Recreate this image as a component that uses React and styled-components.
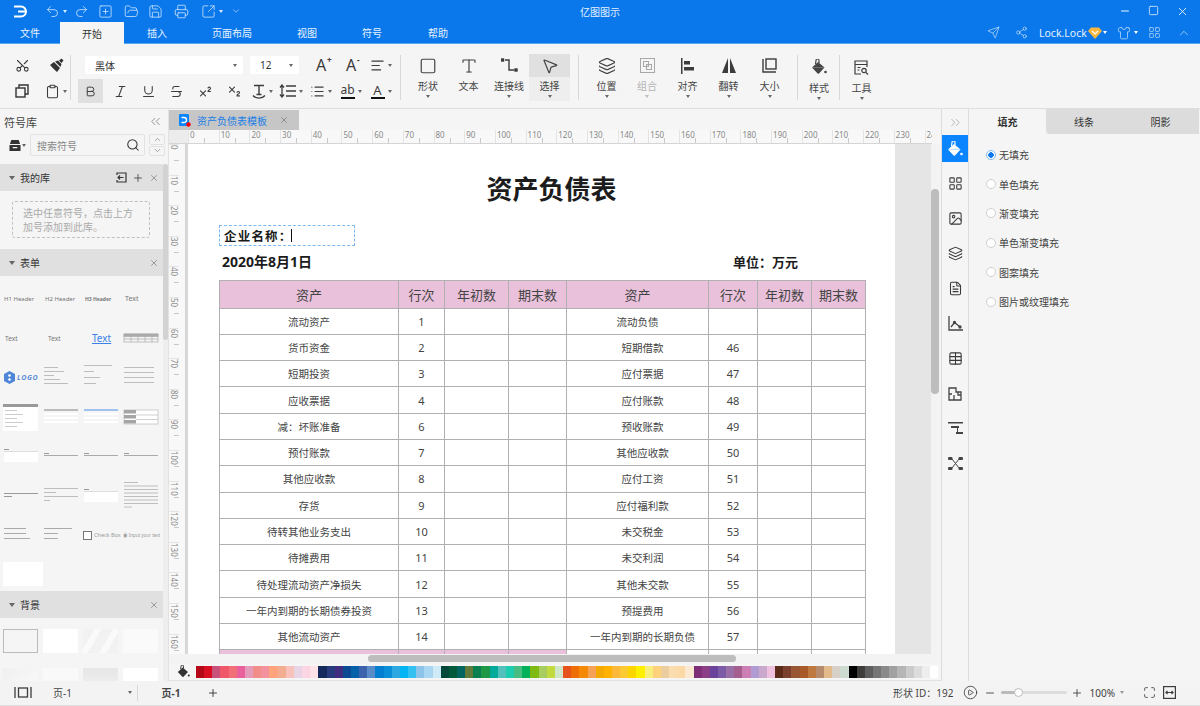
import React from "react";
import styled, { createGlobalStyle } from "styled-components";
import {
  Undo2, Redo2, SquarePlus, FolderOpen, Save, Printer, SquareArrowOutUpRight, ChevronDown, ChevronUp,
  Minus, Square, X, Send, Share2, Shirt, Scissors, Clipboard, Bold, Italic, Underline, Strikethrough,
  Superscript, Subscript, AlignLeft, List, Type, MousePointer2, Layers, Search, Plus,
  ChevronsLeft, ChevronsRight, Image, FileText, Table, Maximize, CirclePlay, LayoutGrid,
} from "lucide-react";

const BLUE = "#0a78ea";
const INK = "#3c3c3c";

const GlobalStyle = createGlobalStyle`
  html, body { margin: 0; padding: 0; overflow: hidden; }
  body { font-family: "Noto Sans", "Noto Sans CJK SC", sans-serif; font-size: 10px; color: #333; }
  * { box-sizing: border-box; }
`;

const Shell = styled.div`
  width: 1200px;
  height: 706px;
  display: flex;
  flex-direction: column;
  overflow: hidden;
  background: #f5f5f5;
`;

/* ---------- title bar ---------- */
const TitleBar = styled.header`
  height: 22px;
  flex: none;
  background: ${BLUE};
  color: #dcecff;
  display: grid;
  grid-template-columns: 1fr auto 1fr;
  align-items: center;
`;
const QuickBar = styled.div`
  display: flex;
  align-items: center;
`;
const QuickBtn = styled.span`
  width: ${({ $w }) => $w}px;
  display: flex;
  align-items: center;
  justify-content: center;
  gap: 3px;
`;
const AppTitle = styled.div`
  font-size: 10px;
  color: #e4f0ff;
`;
const WindowBtns = styled.div`
  display: flex;
  justify-content: flex-end;
  padding-right: 3px;
`;
const WindowBtn = styled.span`
  width: 29px;
  display: flex;
  justify-content: center;
  color: #f0f6ff;
`;
const Caret = styled.i`
  display: inline-block;
  width: 0;
  height: 0;
  flex: none;
  border-left: ${({ $big }) => ($big ? 3.5 : 2.5)}px solid transparent;
  border-right: ${({ $big }) => ($big ? 3.5 : 2.5)}px solid transparent;
  border-top: ${({ $big }) => ($big ? 4 : 3)}px solid ${({ $color }) => $color || "#666"};
`;

/* ---------- menu tabs ---------- */
const MenuRow = styled.nav`
  height: 22px;
  flex: none;
  background: ${BLUE};
  border-bottom: 1px solid #5aa7f2;
  display: flex;
  justify-content: space-between;
  align-items: stretch;
`;
const MenuTabs = styled.div`
  display: flex;
`;
const MenuTab = styled.span`
  width: ${({ $w }) => $w}px;
  display: flex;
  align-items: center;
  justify-content: center;
  font-size: 10px;
  color: ${({ $active }) => ($active ? "#333" : "#e8f2ff")};
  background: ${({ $active }) => ($active ? "#f5f5f5" : "transparent")};
  margin-bottom: ${({ $active }) => ($active ? "-1px" : "0")};
`;
const UserArea = styled.div`
  display: flex;
  align-items: center;
  color: #cfe4fb;
`;
const UserBtn = styled.span`
  width: ${({ $w }) => $w}px;
  display: flex;
  align-items: center;
  justify-content: center;
  gap: 3px;
`;
const UserName = styled.span`
  width: 78px;
  padding-left: 4px;
  display: flex;
  align-items: center;
  gap: 1px;
  font-size: 10.5px;
  color: #e8f2ff;
  white-space: nowrap;
`;

/* ---------- ribbon ---------- */
const Ribbon = styled.section`
  height: 65px;
  flex: none;
  background: #f5f5f5;
  border-bottom: 1px solid #dedede;
  padding-top: 10px;
  display: flex;
  align-items: flex-start;
`;
const ClipGroup = styled.div`
  width: 70px;
  padding-top: 2px;
  display: grid;
  grid-template-columns: 36px 32px;
  grid-template-rows: 18px 24px;
  row-gap: 5px;
  padding-left: 4px;
`;
const Sep = styled.div`
  width: 1px;
  height: ${({ $h }) => $h || 45}px;
  margin-top: 1px;
  flex: none;
  background: #d8d8d8;
`;
const FontGroup = styled.div`
  width: 329px;
  padding: 2px 0 0 7px;
  display: flex;
  flex-direction: column;
  gap: 5px;
`;
const FontRow = styled.div`
  display: flex;
  align-items: center;
  height: ${({ $h }) => $h}px;
  margin-left: ${({ $indent }) => $indent || 0}px;
`;
const Dropdown = styled.div`
  width: ${({ $w }) => $w}px;
  height: 18px;
  margin-right: 7px;
  padding: 0 6px 0 10px;
  background: #fff;
  border-radius: 2px;
  display: flex;
  align-items: center;
  justify-content: space-between;
  font-size: 10px;
  color: #333;
`;
const ToolBtn = styled.span`
  width: ${({ $w }) => $w || 30}px;
  height: 100%;
  flex: none;
  display: flex;
  align-items: center;
  justify-content: center;
  gap: 3px;
  color: ${INK};
  background: ${({ $on }) => ($on ? "#e0e0e0" : "transparent")};
  margin-right: ${({ $mr }) => $mr || 0}px;
`;
const BigA = styled.span`
  position: relative;
  font-size: 16px;
  line-height: 1;
  color: ${INK};
`;
const BigASign = styled.span`
  position: absolute;
  top: -1px;
  left: 11px;
  font-size: 8px;
  line-height: 1;
  font-weight: 700;
`;
const BarLetter = styled.span`
  display: flex;
  flex-direction: column;
  align-items: center;
  font-size: ${({ $size }) => $size}px;
  line-height: 12px;
  color: ${INK};
  &::after {
    content: "";
    width: 14px;
    height: 2px;
    background: #111;
    margin-top: 1px;
  }
`;
const BigGroup = styled.div`
  display: flex;
  padding-left: ${({ $pad }) => $pad || 0}px;
  padding-right: ${({ $right }) => $right || 0}px;
`;
const BigBtn = styled.div`
  width: ${({ $w }) => $w || 41}px;
  height: 47px;
  display: flex;
  flex-direction: column;
  align-items: center;
  font-size: 10px;
  color: ${({ $off }) => ($off ? "#b5b5b5" : "#444")};
  background: ${({ $on }) => ($on ? "#eeeeee" : "transparent")};
`;
const BigIcon = styled.div`
  height: ${({ $tall }) => ($tall ? 26 : 23)}px;
  width: 100%;
  display: flex;
  align-items: center;
  justify-content: center;
  color: ${({ $off }) => ($off ? "#aaa" : "#444")};
  background: ${({ $on }) => ($on ? "#e0e0e0" : "transparent")};
`;
const BigLabel = styled.div`
  height: 15px;
  line-height: 15px;
  margin-top: ${({ $tall }) => ($tall ? 1 : 2)}px;
  white-space: nowrap;
  margin-bottom: 1px;
`;

/* ---------- workspace ---------- */
const Workspace = styled.main`
  flex: 1;
  min-height: 0;
  display: flex;
`;
const LeftPanel = styled.aside`
  width: 169px;
  flex: none;
  display: flex;
  flex-direction: column;
  background: #f5f5f5;
  border-right: 1px solid #e2e2e2;
  overflow: hidden;
`;
const PanelHead = styled.div`
  height: 25px;
  flex: none;
  padding: 0 5px 0 4px;
  display: flex;
  align-items: center;
  justify-content: space-between;
  font-size: 11px;
  color: #444;
`;
const SearchRow = styled.div`
  height: 30px;
  flex: none;
  padding-left: 9px;
  display: flex;
  gap: 4px;
`;
const BoxBtn = styled.span`
  width: 17px;
  height: 22px;
  display: flex;
  align-items: center;
  gap: 1px;
  color: #333;
`;
const SearchBox = styled.div`
  width: 115px;
  height: 22px;
  padding: 0 4px 0 6px;
  border: 1px solid #e2e2e2;
  border-radius: 2px;
  display: flex;
  align-items: center;
  justify-content: space-between;
  font-size: 10px;
  color: #888;
`;
const StepCol = styled.div`
  display: flex;
  flex-direction: column;
  gap: 1px;
`;
const StepBtn = styled.span`
  width: 16px;
  height: 10.5px;
  border: 1px solid #e2e2e2;
  border-radius: 2px;
  display: flex;
  align-items: center;
  justify-content: center;
  color: #888;
`;
const LibraryScroll = styled.div`
  flex: 1;
  min-height: 0;
  display: flex;
  overflow: hidden;
`;
const LibraryList = styled.div`
  width: 163px;
  flex: none;
`;
const LibraryTrack = styled.div`
  width: 5px;
  flex: none;
  background: #eee;
`;
const LibraryThumb = styled.div`
  height: 176px;
  background: #d2d2d2;
  border-radius: 3px;
`;
const SectionHead = styled.div`
  height: 27px;
  padding: 0 4px 0 9px;
  background: #e0e0e0;
  display: flex;
  align-items: center;
  gap: 5px;
  font-size: 10px;
  color: #333;
`;
const SectionTools = styled.span`
  margin-left: auto;
  display: flex;
  align-items: center;
  gap: 5px;
  color: #555;
`;
const MyLibBody = styled.div`
  height: 58px;
  padding: 10px 0 0 12px;
`;
const DropHint = styled.div`
  width: 138px;
  height: 37px;
  padding: 4px 10px;
  border: 1px dashed #c0c0c0;
  border-radius: 3px;
  font-size: 10px;
  line-height: 14px;
  color: #aaa;
`;
const ThumbGrid = styled.div`
  height: 315px;
  padding: 3px 0 0 3px;
  display: grid;
  grid-template-columns: repeat(4, 40px);
  grid-auto-rows: 39.4px;
  align-items: center;
`;
const ThumbText = styled.span`
  font-size: ${({ $size }) => $size}px;
  font-weight: ${({ $bold }) => ($bold ? 700 : 400)};
  color: ${({ $color }) => $color || "#777"};
  padding-left: ${({ $left }) => $left || 1}px;
  text-decoration: ${({ $link }) => ($link ? "underline" : "none")};
  white-space: nowrap;
`;
const LogoThumb = styled.span`
  display: flex;
  align-items: center;
  gap: 2px;
  padding-left: 1px;
  font-size: 7px;
  font-weight: 700;
  font-style: italic;
  letter-spacing: 0.7px;
  color: #5c8ed8;
`;
const CheckThumb = styled.span`
  display: flex;
  align-items: center;
  gap: 2px;
  font-size: ${({ $size }) => $size}px;
  color: #999;
  white-space: nowrap;
  overflow: hidden;
`;
const CheckMark = styled.i`
  width: 9px;
  height: 9px;
  flex: none;
  border: 1px solid #777;
  background: #fff;
`;
const BgGrid = styled.div`
  padding: 11px 0 0 3px;
  display: grid;
  grid-template-columns: repeat(4, 35px);
  column-gap: 5px;
  row-gap: 15px;
`;
const BgTile = styled.div`
  height: 24px;
  border: ${({ $outlined }) => ($outlined ? "1px solid #bbb" : "none")};
  background: ${({ $bg }) => $bg};
`;

/* ---------- centre ---------- */
const Centre = styled.section`
  width: 772px;
  flex: none;
  display: flex;
  flex-direction: column;
  min-height: 0;
`;
const DocTabs = styled.div`
  height: 20px;
  flex: none;
  margin-top: 1px;
  display: flex;
`;
const DocTab = styled.div`
  width: 130px;
  padding: 0 10px 0 10px;
  background: #c6c6c6;
  display: flex;
  align-items: center;
  font-size: 10px;
  color: #1a7ee6;
`;
const DocName = styled.span`
  margin-left: 6px;
  flex: 1;
`;
const RulerTop = styled.div`
  height: 14px;
  flex: none;
  margin-right: 9px;
  display: flex;
  background: #f8f8f8;
  border-bottom: 1px solid #d5d5d5;
  overflow: hidden;
`;
const RulerCorner = styled.div`
  width: 19px;
  flex: none;
  background: #ececec;
`;
const RulerCell = styled.span`
  width: 30.7px;
  flex: none;
  position: relative;
  padding-left: 1px;
  border-left: 1px solid #e4e4e4;
  font-size: 8px;
  line-height: 10px;
  color: #888;
  &::after {
    content: "";
    position: absolute;
    left: 15px;
    bottom: 0;
    width: 1px;
    height: 5px;
    background: #c8c8c8;
  }
`;
const CanvasRow = styled.div`
  flex: 1;
  min-height: 0;
  display: flex;
  overflow: hidden;
`;
const RulerSide = styled.div`
  width: 17px;
  flex: none;
  background: #f8f8f8;
  border-right: 1px solid #d5d5d5;
  overflow: hidden;
`;
const RulerSideCell = styled.span`
  display: block;
  height: 30.6px;
  position: relative;
  border-top: 1px solid #e4e4e4;
  font-size: 8px;
  line-height: 10px;
  color: #888;
  writing-mode: vertical-rl;
  &::after {
    content: "";
    position: absolute;
    right: 0;
    top: 15px;
    width: 5px;
    height: 1px;
    background: #c8c8c8;
  }
`;
const PageGutter = styled.div`
  width: 2px;
  flex: none;
  background: #d8d8d8;
`;
const Page = styled.div`
  width: 707px;
  flex: none;
  background: #fff;
  padding: 29px 30px 0 31px;
  overflow: hidden;
`;
const PageTitle = styled.h1`
  margin: 0;
  height: 32px;
  padding-left: 19px;
  line-height: 32px;
  font-size: 26px;
  font-weight: 700;
  text-align: center;
  color: #1c1c1c;
`;
const CompanyBox = styled.div`
  width: 136px;
  height: 21px;
  margin-top: 20px;
  padding-left: 4px;
  border: 1px dashed #7db8f3;
  display: flex;
  align-items: center;
  font-size: 12.5px;
  font-weight: 700;
  letter-spacing: 1.2px;
  color: #1a1a1a;
`;
const TextCursor = styled.i`
  width: 1px;
  height: 13px;
  margin-left: -2px;
  background: #111;
`;
const MetaRow = styled.div`
  height: 34px;
  padding: 0 67px 4px 3px;
  display: flex;
  align-items: center;
  justify-content: space-between;
  font-size: 13px;
  font-weight: 700;
  color: #1c1c1c;
`;
const DateText = styled.span`
  font-size: 14px;
`;
const Sheet = styled.table`
  width: 646px;
  table-layout: fixed;
  border-collapse: collapse;
`;
const HeadCell = styled.th`
  height: 27.5px;
  padding: 0;
  border: 1px solid #b0b0b0;
  background: #e9c1db;
  font-size: 13px;
  font-weight: 400;
  color: #444;
`;
const Cell = styled.td`
  height: 26.3px;
  padding: 0 0 0 ${({ $indent }) => ($indent ? 10 : 0)}px;
  border: 1px solid #b0b0b0;
  background: ${({ $pink }) => ($pink ? "#e9c1db" : "#fff")};
  font-size: ${({ $num }) => ($num ? 11 : 10.5)}px;
  text-align: center;
  color: #444;
  white-space: nowrap;
`;
const GreyArea = styled.div`
  width: 36px;
  flex: none;
  background: #e5e5e5;
`;
const VScroll = styled.div`
  width: 9px;
  flex: none;
  background: #f3f3f3;
  padding-top: 45px;
`;
const ScrollThumbV = styled.div`
  width: 8px;
  height: 205px;
  border-radius: 4px;
  background: #bdbdbd;
`;
const HScroll = styled.div`
  height: 10px;
  flex: none;
  padding: 1px 0 0 199px;
  background: #f3f3f3;
`;
const ScrollThumbH = styled.div`
  width: 368px;
  height: 7px;
  border-radius: 4px;
  background: #bdbdbd;
`;
const PaletteRow = styled.div`
  height: 17px;
  flex: none;
  display: flex;
  align-items: center;
  padding: 0 0 1px 8px;
  background: #f5f5f5;
  border-bottom: 1px solid #e2e2e2;
`;
const PaletteIcon = styled.span`
  width: 18px;
  margin-right: 1px;
  display: flex;
  color: #333;
`;
const Swatches = styled.div`
  display: flex;
`;
const Swatch = styled.i`
  width: 8.17px;
  height: 12px;
  background: ${({ $c }) => $c};
`;

/* ---------- right side ---------- */
const IconStrip = styled.div`
  width: 28px;
  flex: none;
  display: flex;
  flex-direction: column;
  gap: 8px;
  border-left: 1px solid #dcdcdc;
  border-right: 1px solid #dcdcdc;
  color: #444;
`;
const StripToggle = styled.div`
  height: 26px;
  margin-bottom: -8px;
  display: flex;
  align-items: center;
  justify-content: center;
  color: #999;
`;
const StripBtn = styled.div`
  height: 27px;
  flex: none;
  display: flex;
  align-items: center;
  justify-content: center;
  color: ${({ $on }) => ($on ? "#fff" : "#3a3a3a")};
  background: ${({ $on }) => ($on ? "#0a84ff" : "transparent")};
`;
const RightPanel = styled.aside`
  flex: 1;
  display: flex;
  flex-direction: column;
`;
const PropTabs = styled.div`
  height: 25px;
  flex: none;
  display: flex;
  background: #f5f5f5;
`;
const PropTab = styled.div`
  width: ${({ $w }) => $w}px;
  display: flex;
  align-items: center;
  justify-content: center;
  font-size: 10px;
  font-weight: ${({ $on }) => ($on ? 700 : 400)};
  color: #333;
  background: ${({ $on }) => ($on ? "#f5f5f5" : "#dcdcdc")};
  border-bottom-left-radius: ${({ $first }) => ($first ? "4px" : "0")};
`;
const RadioList = styled.div`
  padding: 6px 0 0 17px;
`;
const RadioRow = styled.label`
  height: 29.4px;
  display: flex;
  align-items: center;
  gap: 3px;
  font-size: 10px;
  color: #444;
`;
const RadioDot = styled.i`
  width: 10px;
  height: 10px;
  border-radius: 50%;
  border: 1px solid ${({ $on }) => ($on ? "#7db8f3" : "#d0d0d0")};
  background: ${({ $on }) => ($on ? "radial-gradient(circle, #0a78ea 0 2.5px, #fff 3px)" : "#fff")};
`;

/* ---------- status bar ---------- */
const StatusBar = styled.footer`
  height: 25px;
  flex: none;
  padding-bottom: 1px;
  display: flex;
  align-items: center;
  background: #f3f3f3;
  border-bottom: 1px solid #dedede;
  color: #444;
`;
const StatusItem = styled.span`
  width: ${({ $w }) => $w}px;
  flex: none;
  display: flex;
  align-items: center;
  justify-content: ${({ $left }) => ($left ? "flex-start" : "center")};
  gap: ${({ $gap }) => $gap || 0}px;
  font-size: 10px;
  font-weight: ${({ $bold }) => ($bold ? 700 : 400)};
  white-space: nowrap;
`;
const PageSelect = styled.div`
  width: 92px;
  height: 16px;
  padding: 0 5px 0 7px;
  border-right: 1px solid #d8d8d8;
  display: flex;
  align-items: center;
  justify-content: space-between;
  font-size: 10px;
`;
const StatusRight = styled.div`
  margin-left: auto;
  padding-right: 23px;
  display: flex;
  align-items: center;
`;
const ZoomTrack = styled.div`
  width: 66px;
  height: 3px;
  border-radius: 2px;
  background: linear-gradient(to right, #bbb 0 26%, #ddd 26%);
  display: flex;
  align-items: center;
  padding-left: 13px;
`;
const ZoomKnob = styled.i`
  width: 9px;
  height: 9px;
  border-radius: 50%;
  background: #fff;
  border: 1px solid #bbb;
`;

const CutIcon = styled(Scissors)`
  transform: rotate(-90deg);
`;

/* drawings with no package icon */
const LogoMark = () => (
  <svg width="15" height="13" viewBox="0 0 15 13" fill="none" stroke="#fff" strokeWidth="2">
    <path d="M1 1.5h7a5 5 0 0 1 0 10H1M5 6.5h8" />
  </svg>
);
const Diamond = () => (
  <svg width="14" height="12" viewBox="0 0 14 12">
    <path d="M3 0.5h8l3 3.5-7 8-7-8z" fill="#f6b73c" />
    <path d="M4 4l3 3 3-3" fill="none" stroke="#fff" strokeWidth="1.2" />
  </svg>
);
const BrushIcon = () => (
  <svg width="15" height="15" viewBox="0 0 15 15" fill="#333">
    <path d="M1 7l4-3 6 6-3 4C6 12 3 9.500 1 7z" />
    <path d="M6 3.500l3-1 3.500 3.500-1 3zM10 2.500L12.500.5l2 2-2 2.500z" />
  </svg>
);
const CopyIcon = () => (
  <svg width="14" height="14" viewBox="0 0 14 14" fill="none" stroke="#333" strokeWidth="1.4">
    <rect x="1" y="4" width="9" height="9" />
    <path d="M4 4V1h9v9h-3" />
  </svg>
);
const TextStyleIcon = () => (
  <svg width="14" height="15" viewBox="0 0 14 15" fill="none" stroke={INK} strokeWidth="1.4">
    <path d="M2 1.500h10M7 1.500v9M4.500 10.500h5M1 11.500c3 3.500 9 3.500 12 0" />
  </svg>
);
const LineSpaceIcon = () => (
  <svg width="17" height="14" viewBox="0 0 17 14" fill="none" stroke={INK} strokeWidth="1.3">
    <path d="M3 1v12M1 3.500L3 1l2 2.500M1 10.500L3 13l2-2.500M7 2h10M7 7h10M7 12h10" />
  </svg>
);
const ConnectorIcon = () => (
  <svg width="17" height="15" viewBox="0 0 17 15" fill="none" stroke={INK} strokeWidth="1.4">
    <path d="M4 2h4v10h5" />
    <rect x="0.500" y="1" width="2" height="2" fill={INK} />
    <rect x="14" y="11" width="2" height="2" fill={INK} />
  </svg>
);
const GroupIcon = () => (
  <svg width="17" height="17" viewBox="0 0 17 17" fill="none" stroke="#a8a8a8" strokeWidth="1">
    <rect x="1.500" y="1.500" width="14" height="14" />
    <rect x="4.500" y="4.500" width="5" height="5" />
    <rect x="7.500" y="7.500" width="5" height="5" />
  </svg>
);
const AlignObjectsIcon = () => (
  <svg width="15" height="16" viewBox="0 0 15 16" fill={INK}>
    <rect x="1" y="0" width="1.500" height="16" />
    <rect x="4" y="3" width="6" height="3.500" />
    <rect x="4" y="9" width="10" height="3.500" />
  </svg>
);
const FlipIcon = () => (
  <svg width="16" height="15" viewBox="0 0 16 15" fill={INK}>
    <path d="M7 0v15H1zM9 0v15h6z" />
  </svg>
);
const SizeIcon = () => (
  <svg width="15" height="15" viewBox="0 0 15 15" fill="none" stroke={INK} strokeWidth="1.400">
    <path d="M1 1v13h13" />
    <rect x="4" y="1" width="10" height="10" />
  </svg>
);
const ToolIcon = () => (
  <svg width="15" height="15" viewBox="0 0 15 15" fill="none" stroke={INK} strokeWidth="1.200">
    <path d="M7 14H1V1h12v6M1 4.500h12M3.500 7.500h3M3.500 10h2" />
    <circle cx="10" cy="10.500" r="2.200" />
    <path d="M11.800 12.300L14 14.500" />
  </svg>
);
const FitWidthIcon = () => (
  <svg width="13" height="13" viewBox="0 0 13 13" fill="none" stroke={INK} strokeWidth="1.200">
    <rect x="0.600" y="0.600" width="11.800" height="11.800" />
    <path d="M3 6.500h7M4.500 5L3 6.500 4.500 8M8.500 5L10 6.500 8.500 8" />
  </svg>
);
const PageFrameIcon = () => (
  <svg width="18" height="11" viewBox="0 0 18 11" fill="none" stroke={INK} strokeWidth="1.300">
    <rect x="4.500" y="1" width="9" height="9" />
    <path d="M1 0v11M17 0v11" />
  </svg>
);
const ChartIcon = () => (
  <svg width="15" height="15" viewBox="0 0 15 15" fill="none" stroke="#444" strokeWidth="1.300">
    <path d="M1 0v14h14M3 11l3.500-4.500L9 8.500 12 11" />
    <circle cx="6.500" cy="6.500" r="1" fill="#444" />
    <circle cx="12" cy="11" r="1" fill="#444" />
  </svg>
);
const PlanIcon = () => (
  <svg width="14" height="14" viewBox="0 0 14 14" fill="none" stroke="#444" strokeWidth="1.300">
    <path d="M1 1h7v4h5v8H1zM1 7h3M6 13V8M10 5v3h3" />
  </svg>
);
const OutlineIcon = () => (
  <svg width="15" height="13" viewBox="0 0 15 13" fill="#444">
    <rect x="0" y="0" width="15" height="1.500" />
    <rect x="3" y="4" width="8" height="2" />
    <path d="M9 6h1v4H9z" />
    <rect x="8" y="10" width="7" height="2" />
  </svg>
);
const NodesIcon = () => (
  <svg width="15" height="13" viewBox="0 0 15 13" fill="#444">
    <rect x="0" y="0" width="4.500" height="3" rx="1" />
    <rect x="0" y="10" width="4.500" height="3" rx="1" />
    <rect x="10.500" y="0" width="4.500" height="3" rx="1" />
    <rect x="10.500" y="10" width="4.500" height="3" rx="1" />
    <path d="M4 2l3.500 4.500L11 2M4 11l3.500-4.500L11 11" fill="none" stroke="#444" />
  </svg>
);
const DocBadge = () => (
  <svg width="12" height="13" viewBox="0 0 12 13">
    <rect x="0" y="0" width="10" height="12" rx="1" fill="#0a84ff" />
    <path d="M2.500 3.500h2.500a2.500 2.500 0 0 1 0 5H2.500" fill="none" stroke="#fff" strokeWidth="1.300" />
    <circle cx="9.500" cy="10.500" r="2.200" fill="#f00" />
  </svg>
);
const HexLogo = () => (
  <svg width="11" height="13" viewBox="0 0 11 13">
    <path d="M5.500 0L11 3v7l-5.500 3L0 10V3z" fill="#4f86d8" />
    <circle cx="5.500" cy="4.500" r="1.300" fill="#fff" />
    <circle cx="5.500" cy="8.500" r="1.300" fill="#fff" />
  </svg>
);
const Bucket = ({ size = 16 }) => (
  <svg width={size} height={size} viewBox="0 0 16 16" fill="currentColor">
    <path d="M1 8.500L7 3l6.500 5.500H1z" />
    <path d="M1 8.500h12.500L8 14.500a1 1 0 0 1-1.400 0z" />
    <path d="M4.500 5L5 1.500a1.500 1.500 0 0 1 3 0V4" fill="none" stroke="currentColor" strokeWidth="1.200" />
    <circle cx="14.500" cy="13" r="1.300" />
  </svg>
);
const DrawerIcon = () => (
  <svg width="13" height="13" viewBox="0 0 13 13" fill="#333">
    <path d="M2.500 0.500h8L12 5H1z" />
    <path d="M0.500 6h12v6.500h-12zM4 8v1.500h5V8z" fillRule="evenodd" />
  </svg>
);
const ImportIcon = () => (
  <svg width="11" height="11" viewBox="0 0 11 11" fill="none" stroke="#333" strokeWidth="1.200">
    <path d="M1 3V1h9v9H1V8M7.500 5.500H2M4 3.500l-2 2 2 2" />
  </svg>
);

/* wireframe thumbnails of the form templates */
const MicroLines = ({ rows, width = 36, gap = 4, color = "#bdbdbd" }) => (
  <svg width={width} height={rows.length * gap + 2}>
    {rows.map((w, i) => (
      <rect key={i} x="1" y={i * gap + 1} width={w} height="1" fill={color} />
    ))}
  </svg>
);
const TableThumb = () => (
  <svg width="36" height="10" fill="none" stroke="#aaa" strokeWidth="0.700">
    <rect x="1" y="1" width="34" height="8" />
    <rect x="1" y="1" width="34" height="2.500" fill="#aaa" />
    <path d="M1 6h34M8 1v8M15 1v8M22 1v8M29 1v8" />
  </svg>
);
const CardThumb = () => (
  <svg width="36" height="30">
    <rect x="0" y="2" width="35" height="27" fill="#fff" />
    <rect x="0" y="2" width="35" height="3" fill="#999" />
    {[8, 12, 16, 20, 24].map((y) => (
      <rect key={y} x="2" y={y} width={y % 8 ? 18 : 12} height="1" fill="#ccc" />
    ))}
  </svg>
);
const BandThumb = ({ color }) => (
  <svg width="36" height="18">
    <rect x="1" y="1" width="34" height="2" fill={color} />
    {[5, 9, 13].map((y) => (
      <rect key={y} x="1" y={y} width="34" height="2" fill="#fff" />
    ))}
  </svg>
);
const FieldThumb = () => (
  <svg width="36" height="16" fill="#a5a5a5">
    <rect x="1" y="1" width="34" height="14" fill="#fff" stroke="#bbb" strokeWidth="0.700" />
    <rect x="1" y="1" width="12" height="3.500" />
    <rect x="1" y="6" width="12" height="3.500" />
    <rect x="1" y="11" width="12" height="3.500" />
    <path d="M13 6h22M13 10.500h22" stroke="#bbb" strokeWidth="0.700" />
  </svg>
);
const InputThumb = ({ box }) => (
  <svg width="36" height={box ? 14 : 6}>
    {box && <rect x="1" y="3" width="34" height="10" fill="#fff" />}
    <rect x="1" y="2" width="34" height="1" fill={box ? "#ddd" : "#aaa"} />
    <rect x="1" y="0" width="5" height="1" fill="#999" />
  </svg>
);

const rulerMarks = Array.from({ length: 25 }, (_, i) => i * 10);
const sideMarks = Array.from({ length: 17 }, (_, i) => i * 10);

const rows = [
  ["流动资产", 1, "流动负债", ""],
  ["货币资金", 2, "短期借款", 46],
  ["短期投资", 3, "应付票据", 47],
  ["应收票据", 4, "应付账款", 48],
  ["减：坏账准备", 6, "预收账款", 49],
  ["预付账款", 7, "其他应收款", 50],
  ["其他应收款", 8, "应付工资", 51],
  ["存货", 9, "应付福利款", 52],
  ["待转其他业务支出", 10, "未交税金", 53],
  ["待摊费用", 11, "未交利润", 54],
  ["待处理流动资产净损失", 12, "其他未交款", 55],
  ["一年内到期的长期债券投资", 13, "预提费用", 56],
  ["其他流动资产", 14, "一年内到期的长期负债", 57],
];

const columns = [179, 46, 64, 58, 142, 49, 54, 54];
const headers = ["资产", "行次", "年初数", "期末数", "资产", "行次", "年初数", "期末数"];

const palette = [
  "#b5071a", "#d80f22", "#c8527a", "#ee5868", "#f06f78", "#e9619c", "#e49ab9", "#f18d8a", "#f4929e", "#fda47d", "#f3ad93", "#f8c2bb", "#e9d4e5", "#fcd5e3", "#fde3e7",
  "#14295c", "#263c7c", "#3f2e80", "#0e4a94", "#0662a8", "#3f62ad", "#5a8cc8", "#0580d0", "#0b8fd6", "#2da9e2", "#00b5f1", "#33c1f2", "#8dc4ea", "#a9d6f0", "#cfe9f6",
  "#03473a", "#02593b", "#02665f", "#5f7a3a", "#0a8050", "#1f9845", "#00ab9c", "#53c0bc", "#1ecdaf", "#47bd80", "#00b159", "#7fb913", "#a7cd5f", "#c2da40", "#cfe6c8",
  "#e6531d", "#ef6d06", "#f58804", "#f4a258", "#f4a903", "#ffb200", "#fdb93a", "#fdca33", "#ffd500", "#fff000", "#f8ee7c", "#fdd27b", "#eccd9e", "#fbdcae", "#fcd9a6", "#fbe9d2",
  "#7e3077", "#8a3f87", "#6b429c", "#7c5aa6", "#9a6fa8", "#a55f8e", "#cb7fb5", "#ae9cd2", "#c9a8cb", "#eec2de",
  "#5c2b1a", "#7d3f2d", "#995632", "#a85a2a", "#bf7a41", "#b68b6e", "#e3bb8a", "#d7d0c9", "#cedbd0",
  "#000000", "#3f3d3c", "#5e5e5e", "#767676", "#8a8a8a", "#a0a0a0", "#b5b5b5", "#cbcbcb", "#dcdcdc", "#eeeeee", "#ffffff",
];

const menuTabs = [
  ["文件", 60], ["开始", 64], ["插入", 66], ["页面布局", 84], ["视图", 66], ["符号", 64], ["帮助", 68],
];

const fills = ["无填充", "单色填充", "渐变填充", "单色渐变填充", "图案填充", "图片或纹理填充"];

const ic = { size: 15, strokeWidth: 1.7 };
const big = { size: 18, strokeWidth: 1.6 };
const quick = { size: 15, strokeWidth: 1.2 };
const strip = { size: 15, strokeWidth: 1.7 };

const App = () => (
  <Shell>
    <GlobalStyle />
    <TitleBar>
      <QuickBar>
        <QuickBtn $w={40}><LogoMark /></QuickBtn>
        <QuickBtn $w={31}><Undo2 {...quick} /><Caret $color="#dcecff" /></QuickBtn>
        <QuickBtn $w={20}><Redo2 {...quick} /></QuickBtn>
        <QuickBtn $w={28}><SquarePlus {...quick} /></QuickBtn>
        <QuickBtn $w={24}><FolderOpen {...quick} /></QuickBtn>
        <QuickBtn $w={25}><Save {...quick} /></QuickBtn>
        <QuickBtn $w={26}><Printer {...quick} /></QuickBtn>
        <QuickBtn $w={36}><SquareArrowOutUpRight {...quick} /><Caret $color="#dcecff" /></QuickBtn>
        <QuickBtn $w={12}><ChevronDown size={10} strokeWidth={1.4} /></QuickBtn>
      </QuickBar>
      <AppTitle>亿图图示</AppTitle>
      <WindowBtns>
        <WindowBtn><Minus size={12} strokeWidth={2} /></WindowBtn>
        <WindowBtn><Square size={11} strokeWidth={1.6} /></WindowBtn>
        <WindowBtn><X size={13} strokeWidth={1.6} /></WindowBtn>
      </WindowBtns>
    </TitleBar>

    <MenuRow>
      <MenuTabs>
        {menuTabs.map(([name, w]) => (
          <MenuTab key={name} $w={w} $active={name === "开始"}>{name}</MenuTab>
        ))}
      </MenuTabs>
      <UserArea>
        <UserBtn $w={27}><Send size={13} strokeWidth={1.2} /></UserBtn>
        <UserBtn $w={28}><Share2 size={13} strokeWidth={1.2} /></UserBtn>
        <UserName>Lock.Lock<Diamond /><Caret $color="#fff" /></UserName>
        <UserBtn $w={29}><Shirt size={14} strokeWidth={1.2} /><Caret $color="#fff" /></UserBtn>
        <UserBtn $w={25}><LayoutGrid size={13} strokeWidth={1.2} /></UserBtn>
        <UserBtn $w={33}><ChevronUp size={14} strokeWidth={1.2} /></UserBtn>
      </UserArea>
    </MenuRow>

    <Ribbon>
      <ClipGroup>
        <ToolBtn $w={36}><CutIcon size={15} strokeWidth={1.7} /></ToolBtn>
        <ToolBtn $w={32}><BrushIcon /></ToolBtn>
        <ToolBtn $w={36}><CopyIcon /></ToolBtn>
        <ToolBtn $w={32}><Clipboard size={15} strokeWidth={1.7} /><Caret /></ToolBtn>
      </ClipGroup>
      <Sep />
      <FontGroup>
        <FontRow $h={18} $indent={7}>
          <Dropdown $w={158}>黑体<Caret /></Dropdown>
          <Dropdown $w={49}>12<Caret /></Dropdown>
          <ToolBtn><BigA>A<BigASign>+</BigASign></BigA></ToolBtn>
          <ToolBtn><BigA>A<BigASign>-</BigASign></BigA></ToolBtn>
          <ToolBtn><AlignLeft {...ic} /><Caret /></ToolBtn>
        </FontRow>
        <FontRow $h={24}>
          <ToolBtn $w={25} $mr={3} $on><Bold size={13} strokeWidth={1.8} /></ToolBtn>
          <ToolBtn $w={28}><Italic {...ic} /></ToolBtn>
          <ToolBtn $w={28}><Underline {...ic} /></ToolBtn>
          <ToolBtn $w={28}><Strikethrough {...ic} /></ToolBtn>
          <ToolBtn $w={30}><Superscript {...ic} /></ToolBtn>
          <ToolBtn $w={28}><Subscript {...ic} /></ToolBtn>
          <ToolBtn $w={28}><TextStyleIcon /><Caret /></ToolBtn>
          <ToolBtn $w={30}><LineSpaceIcon /><Caret /></ToolBtn>
          <ToolBtn $w={30}><List {...ic} /><Caret /></ToolBtn>
          <ToolBtn $w={30}><BarLetter $size={12}>ab</BarLetter><Caret /></ToolBtn>
          <ToolBtn $w={30}><BarLetter $size={13}>A</BarLetter><Caret /></ToolBtn>
        </FontRow>
      </FontGroup>
      <Sep />
      <BigGroup $pad={7} $right={8}>
        <BigBtn $w={40}><BigIcon><Square {...big} /></BigIcon><BigLabel>形状</BigLabel><Caret /></BigBtn>
        <BigBtn><BigIcon><Type {...big} /></BigIcon><BigLabel>文本</BigLabel></BigBtn>
        <BigBtn $w={40}><BigIcon><ConnectorIcon /></BigIcon><BigLabel>连接线</BigLabel><Caret /></BigBtn>
        <BigBtn $on><BigIcon $on><MousePointer2 {...big} /></BigIcon><BigLabel>选择</BigLabel><Caret /></BigBtn>
      </BigGroup>
      <Sep />
      <BigGroup $pad={7} $right={7}>
        <BigBtn><BigIcon><Layers {...big} /></BigIcon><BigLabel>位置</BigLabel><Caret /></BigBtn>
        <BigBtn $w={40} $off><BigIcon $off><GroupIcon /></BigIcon><BigLabel>组合</BigLabel><Caret $color="#bbb" /></BigBtn>
        <BigBtn><BigIcon><AlignObjectsIcon /></BigIcon><BigLabel>对齐</BigLabel><Caret /></BigBtn>
        <BigBtn><BigIcon><FlipIcon /></BigIcon><BigLabel>翻转</BigLabel><Caret /></BigBtn>
        <BigBtn><BigIcon><SizeIcon /></BigIcon><BigLabel>大小</BigLabel><Caret /></BigBtn>
      </BigGroup>
      <Sep />
      <BigGroup $pad={1}>
        <BigBtn $w={40}><BigIcon $tall><Bucket size={16} /></BigIcon><BigLabel $tall>样式</BigLabel><Caret /></BigBtn>
      </BigGroup>
      <Sep />
      <BigGroup $pad={1}>
        <BigBtn $w={41}><BigIcon $tall><ToolIcon /></BigIcon><BigLabel $tall>工具</BigLabel><Caret /></BigBtn>
      </BigGroup>
    </Ribbon>

    <Workspace>
      <LeftPanel>
        <PanelHead>符号库<ChevronsLeft size={15} strokeWidth={1.1} color="#666" /></PanelHead>
        <SearchRow>
          <BoxBtn><DrawerIcon /><Caret /></BoxBtn>
          <SearchBox>搜索符号<Search size={14} strokeWidth={1.8} color="#333" /></SearchBox>
          <StepCol>
            <StepBtn><ChevronUp size={9} /></StepBtn>
            <StepBtn><ChevronDown size={9} /></StepBtn>
          </StepCol>
        </SearchRow>
        <LibraryScroll>
          <LibraryList>
            <SectionHead>
              <Caret $big $color="#666" />我的库
              <SectionTools>
                <ImportIcon />
                <Plus size={12} strokeWidth={1.5} color="#333" />
                <X size={10} strokeWidth={1.6} color="#777" />
              </SectionTools>
            </SectionHead>
            <MyLibBody>
              <DropHint>选中任意符号，点击上方<br />加号添加到此库。</DropHint>
            </MyLibBody>
            <SectionHead>
              <Caret $big $color="#666" />表单
              <SectionTools><X size={10} strokeWidth={1.6} color="#777" /></SectionTools>
            </SectionHead>
            <ThumbGrid>
              <ThumbText $size={6}>H1 Header</ThumbText>
              <ThumbText $size={6} $left={2}>H2 Header</ThumbText>
              <ThumbText $size={5} $bold $left={2}>H3 Header</ThumbText>
              <ThumbText $size={7} $left={2}>Text</ThumbText>
              <ThumbText $size={6.5} $left={2}>Text</ThumbText>
              <ThumbText $size={6.5} $left={5}>Text</ThumbText>
              <ThumbText $size={10} $color="#3b82e8" $link $left={9}>Text</ThumbText>
              <TableThumb />
              <LogoThumb><HexLogo />LOGO</LogoThumb>
              <MicroLines rows={[14, 20, 10, 16, 24]} />
              <MicroLines rows={[28, 10, 16, 12]} gap={6} />
              <MicroLines rows={[30, 30, 30, 30]} gap={5} />
              <CardThumb />
              <BandThumb color="#bbb" />
              <BandThumb color="#9fc2ee" />
              <FieldThumb />
              <InputThumb box />
              <InputThumb />
              <InputThumb />
              <InputThumb />
              <MicroLines rows={[34, 8]} gap={3} color="#999" />
              <MicroLines rows={[34, 12, 34, 6]} gap={4} />
              <InputThumb box />
              <MicroLines rows={[14, 34, 34, 34, 34, 34, 34, 8]} gap={3.500} />
              <MicroLines rows={[22, 22, 26]} gap={5} color="#aaa" />
              <MicroLines rows={[28, 14, 14]} gap={5} color="#aaa" />
              <CheckThumb $size={5.5}><CheckMark />Check Box</CheckThumb>
              <CheckThumb $size={4.5}>◉ Input your text</CheckThumb>
              <BgTile $bg="#fff" />
            </ThumbGrid>
            <SectionHead>
              <Caret $big $color="#666" />背景
              <SectionTools><X size={10} strokeWidth={1.6} color="#777" /></SectionTools>
            </SectionHead>
            <BgGrid>
              <BgTile $outlined $bg="#f5f5f5" />
              <BgTile $bg="#fff" />
              <BgTile $bg="repeating-linear-gradient(120deg, #f2f2f2 0 10px, #fafafa 10px 16px)" />
              <BgTile $bg="#fafafa" />
              <BgTile $bg="linear-gradient(135deg, #f0f0f0, #fafafa)" />
              <BgTile $bg="#f9f9f9" />
              <BgTile $bg="linear-gradient(#e6e6e6, #f2f2f2)" />
              <BgTile $bg="#fff" />
            </BgGrid>
          </LibraryList>
          <LibraryTrack><LibraryThumb /></LibraryTrack>
        </LibraryScroll>
      </LeftPanel>

      <Centre>
        <DocTabs>
          <DocTab>
            <DocBadge />
            <DocName>资产负债表模板</DocName>
            <X size={10} strokeWidth={1.4} color="#666" />
          </DocTab>
        </DocTabs>
        <RulerTop>
          <RulerCorner />
          {rulerMarks.map((n) => <RulerCell key={n}>{n}</RulerCell>)}
        </RulerTop>
        <CanvasRow>
          <RulerSide>
            {sideMarks.map((n) => <RulerSideCell key={n}>{n}</RulerSideCell>)}
          </RulerSide>
          <PageGutter />
          <Page>
            <PageTitle>资产负债表</PageTitle>
            <CompanyBox>企业名称：<TextCursor /></CompanyBox>
            <MetaRow><DateText>2020年8月1日</DateText><span>单位：万元</span></MetaRow>
            <Sheet>
              <colgroup>
                {columns.map((w, i) => <col key={i} width={w} />)}
              </colgroup>
              <thead>
                <tr>{headers.map((h, i) => <HeadCell key={i}>{h}</HeadCell>)}</tr>
              </thead>
              <tbody>
                {rows.map(([left, no, right, code], i) => (
                  <tr key={left + i}>
                    <Cell>{left}</Cell>
                    <Cell $num>{no}</Cell>
                    <Cell />
                    <Cell />
                    <Cell $indent={i > 0}>{right}</Cell>
                    <Cell $num>{code}</Cell>
                    <Cell />
                    <Cell />
                  </tr>
                ))}
                <tr>
                  <Cell $pink /><Cell $pink /><Cell $pink /><Cell $pink />
                  <Cell /><Cell /><Cell /><Cell />
                </tr>
              </tbody>
            </Sheet>
          </Page>
          <GreyArea />
          <VScroll><ScrollThumbV /></VScroll>
        </CanvasRow>
        <HScroll><ScrollThumbH /></HScroll>
        <PaletteRow>
          <PaletteIcon><Bucket size={13} /></PaletteIcon>
          <Swatches>
            {palette.map((c, i) => <Swatch key={c + i} $c={c} />)}
          </Swatches>
        </PaletteRow>
      </Centre>

      <IconStrip>
        <StripToggle><ChevronsRight size={15} strokeWidth={1.1} /></StripToggle>
        <StripBtn $on><Bucket size={16} /></StripBtn>
        <StripBtn><LayoutGrid {...strip} /></StripBtn>
        <StripBtn><Image {...strip} /></StripBtn>
        <StripBtn><Layers {...strip} /></StripBtn>
        <StripBtn><FileText {...strip} /></StripBtn>
        <StripBtn><ChartIcon /></StripBtn>
        <StripBtn><Table {...strip} /></StripBtn>
        <StripBtn><PlanIcon /></StripBtn>
        <StripBtn><OutlineIcon /></StripBtn>
        <StripBtn><NodesIcon /></StripBtn>
      </IconStrip>

      <RightPanel>
        <PropTabs>
          <PropTab $w={77} $on>填充</PropTab>
          <PropTab $w={76} $first>线条</PropTab>
          <PropTab $w={77}>阴影</PropTab>
        </PropTabs>
        <RadioList>
          {fills.map((f, i) => (
            <RadioRow key={f}><RadioDot $on={i === 0} />{f}</RadioRow>
          ))}
        </RadioList>
      </RightPanel>
    </Workspace>

    <StatusBar>
      <StatusItem $w={46}><PageFrameIcon /></StatusItem>
      <PageSelect>页-1<Caret /></PageSelect>
      <StatusItem $w={66} $bold>页-1</StatusItem>
      <StatusItem $w={18}><Plus size={12} strokeWidth={2} /></StatusItem>
      <StatusRight>
        <StatusItem $w={68} $left>形状 ID：192</StatusItem>
        <StatusItem $w={18}><CirclePlay size={15} strokeWidth={1.4} /></StatusItem>
        <StatusItem $w={22}><Minus size={12} strokeWidth={1.8} /></StatusItem>
        <ZoomTrack><ZoomKnob /></ZoomTrack>
        <StatusItem $w={20}><Plus size={12} strokeWidth={1.8} /></StatusItem>
        <StatusItem $w={50} $left $gap={5}>&nbsp;100%<Caret $color="#999" /></StatusItem>
        <StatusItem $w={24}><Maximize size={13} strokeWidth={1.6} /></StatusItem>
        <StatusItem $w={16}><FitWidthIcon /></StatusItem>
      </StatusRight>
    </StatusBar>
  </Shell>
);

export default App;
